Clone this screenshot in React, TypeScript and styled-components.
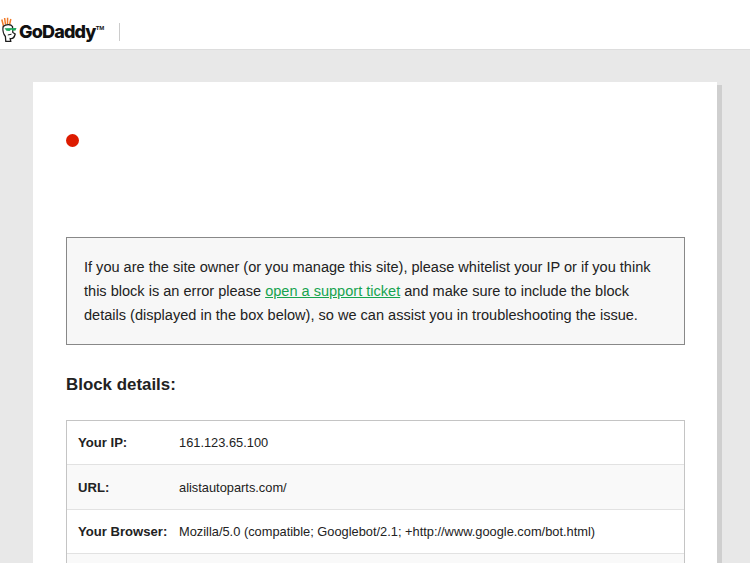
import React from 'react';
import styled, { createGlobalStyle } from 'styled-components';

const GlobalStyle = createGlobalStyle`
  html, body {
    margin: 0;
    padding: 0;
    height: 100%;
    overflow: hidden;
    background: #e8e8e8;
    font-family: "Liberation Sans", Arial, sans-serif;
    color: #222222;
  }
`;

const Header = styled.header`
  box-sizing: border-box;
  height: 50px;
  background: #ffffff;
  border-bottom: 1px solid #dddddd;
  display: flex;
  align-items: flex-start;
  padding: 17px 0 0 1px;
`;

const Logo = styled.div`
  display: flex;
  align-items: center;
  height: 25px;
`;

const Wordmark = styled.span`
  font-family: Inter, "Liberation Sans", sans-serif;
  font-size: 18px;
  font-weight: 800;
  letter-spacing: -0.85px;
  color: #111111;
  margin: 4px 0 0 1px;
`;

const Tm = styled.sup`
  font-family: "Liberation Sans", sans-serif;
  font-size: 6px;
  font-weight: 700;
  letter-spacing: 0;
  vertical-align: 8px;
  line-height: 0;
`;

const Divider = styled.span`
  width: 1px;
  height: 18px;
  margin: 5px 0 0 15px;
  background: #cccccc;
`;

const Page = styled.main`
  padding: 32px 33px 0;
`;

const Card = styled.section`
  background: #ffffff;
  box-shadow: 5px 3px 0 0 #cfcfcf;
  padding: 52px 32px 40px 33px;
  height: 600px;
`;

const StatusDot = styled.div`
  width: 13px;
  height: 13px;
  border-radius: 50%;
  background: #dd1b00;
  margin-bottom: 90px;
`;

const Notice = styled.div`
  box-sizing: border-box;
  height: 108px;
  padding: 18px 17px;
  border: 1px solid #888888;
  background: #f7f7f7;
  font-size: 14.55px;
  line-height: 23.8px;
  color: #222222;
`;

const SupportLink = styled.a`
  color: #16a34f;
  text-decoration: underline;
`;

const Heading = styled.h2`
  margin: 30px 0 25px;
  font-size: 16.9px;
  line-height: 20px;
  font-weight: 700;
  color: #222222;
`;

const Details = styled.div`
  border: 1px solid #c4c4c4;
`;

const Row = styled.div<{ $shaded?: boolean }>`
  box-sizing: border-box;
  height: 44.4px;
  display: flex;
  align-items: center;
  padding-left: 11px;
  font-size: 12.83px;
  background: ${p => (p.$shaded ? '#f9f9f9' : '#ffffff')};
  border-bottom: 1px solid #e2e2e2;
`;

const Label = styled.span`
  width: 101px;
  flex: none;
  font-size: 13.1px;
  font-weight: 700;
  color: #222222;
`;

const Value = styled.span`
  color: #222222;
`;

function Mascot() {
  return (
    <svg width="17" height="25" viewBox="0 0 17 25">
      <path d="M2.5 9 L0.8 2.5 M4.5 7.5 L3.6 1 M6.5 7.5 L6.6 0.8 M8.5 8 L9.8 2" stroke="#f07a28" strokeWidth="1.5" fill="none" />
      <path d="M2.2 9.5 C5 7 10 7.2 11.5 9.5 L11.8 15.5 L14.2 17 C13.5 20 11.5 22 9.2 21.6 L9.8 24.5 L4.8 24.5 L4.4 19.5 C2.6 17.5 1.4 13 2.2 9.5Z" fill="#ffffff" stroke="#1c1c1c" strokeWidth="1.3" />
      <path d="M3.5 11.3 L15.5 11 L14.5 13.6 L11.5 13.8 L10.2 12.6 L8.5 14 L5.5 13.8Z" fill="#1fa55b" />
      <path d="M6.8 18 L10.5 17.2" stroke="#1c1c1c" strokeWidth="1" />
    </svg>
  );
}

const rows = [
  { label: 'Your IP:', value: '161.123.65.100' },
  { label: 'URL:', value: 'alistautoparts.com/' },
  { label: 'Your Browser:', value: 'Mozilla/5.0 (compatible; Googlebot/2.1; +http://www.google.com/bot.html)' },
  { label: '', value: '' },
];

export default function App() {
  return (
    <>
      <GlobalStyle />
      <Header>
        <Logo>
          <Mascot />
          <Wordmark>GoDaddy<Tm>TM</Tm></Wordmark>
          <Divider />
        </Logo>
      </Header>
      <Page>
        <Card>
          <StatusDot />
          <Notice>
            If you are the site owner (or you manage this site), please whitelist your IP or if you think
            this block is an error please <SupportLink href="#">open a support ticket</SupportLink> and make sure to include the block
            details (displayed in the box below), so we can assist you in troubleshooting the issue.
          </Notice>
          <Heading>Block details:</Heading>
          <Details>
            {rows.map((row, i) => (
              <Row key={row.label || i} $shaded={i % 2 === 1}>
                <Label>{row.label}</Label>
                <Value>{row.value}</Value>
              </Row>
            ))}
          </Details>
        </Card>
      </Page>
    </>
  );
}
